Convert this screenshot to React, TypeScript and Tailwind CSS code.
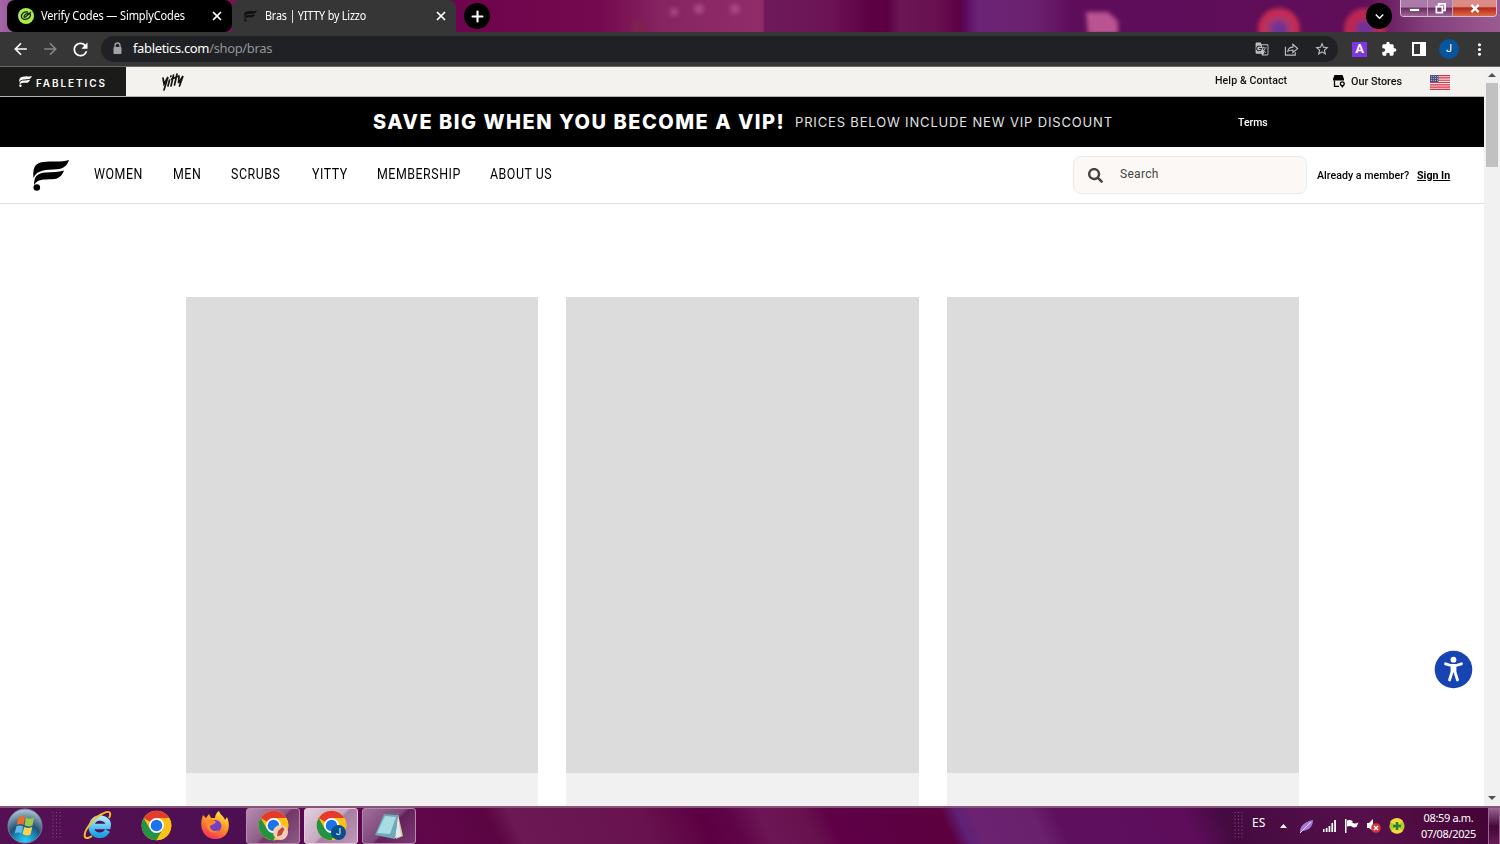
import React from 'react';
import {
  MdArrowBack,
  MdArrowForward,
  MdExtension,
  MdGTranslate,
  MdKeyboardArrowDown,
  MdMoreVert,
  MdRefresh,
  MdStarBorder,
} from 'react-icons/md';
import { FaSearch } from 'react-icons/fa';
import { Plus, X } from 'lucide-react';

const NAV_ITEMS = [
  { label: 'WOMEN', box: 'w-[79px]' },
  { label: 'MEN', box: 'w-[57.500px]' },
  { label: 'SCRUBS', box: 'w-[81px]' },
  { label: 'YITTY', box: 'w-[65px]' },
  { label: 'MEMBERSHIP', box: 'w-[113px]' },
  { label: 'ABOUT US', box: 'w-[80px]' },
];

const FableticsMark: React.FC<{ className?: string }> = ({ className }) => (
  <svg viewBox="0 0 36 31" className={className} fill="currentColor">
    <path d="M.500 18C-.500 8 2 3 10 2C19 1 28 2.500 36 0C34 6 30 9 24 9.300C13 10 4 9.500 .500 18Z" />
    <path d="M1 25C1 17 4 13 13 12.600C20 12.200 25 12 31 10.500C29 16.500 25 19 19 19.300C10 19.600 5 19 1 25Z" />
    <circle cx="3.800" cy="27.500" r="3.300" />
  </svg>
);

const ChromeLogo: React.FC<{ className?: string }> = ({ className }) => (
  <svg viewBox="0 0 48 48" className={className}>
    <circle cx="24" cy="24" r="23" fill="#fbc116" />
    <path d="M24 24L4.100 12.500A23 23 0 0 1 43.900 12.500H24Z" fill="#e33b2e" />
    <path d="M4.100 12.500A23 23 0 0 0 24 47L34 29.500L24 24L14 29.500Z" fill="#229342" />
    <path d="M24 12.500H43.900A23 23 0 0 1 24 47L34 29.500Z" fill="#fbc116" />
    <circle cx="24" cy="24" r="11.500" fill="#fff" />
    <circle cx="24" cy="24" r="9" fill="#1a73e8" />
  </svg>
);

const TopWallpaper = () => (
  <svg className="absolute inset-0" width="1500" height="32" viewBox="0 0 1500 32">
    <defs>
      <linearGradient id="sky" x1="0" x2="1">
        <stop offset="0" stopColor="#a566a7" />
        <stop offset=".006" stopColor="#9b5b9c" />
        <stop offset=".15" stopColor="#7a1258" />
        <stop offset=".31" stopColor="#6e044d" />
        <stop offset=".4" stopColor="#75094f" />
        <stop offset=".44" stopColor="#862461" />
        <stop offset=".508" stopColor="#912c6b" />
        <stop offset=".51" stopColor="#6e1a5b" />
        <stop offset=".555" stopColor="#6c1355" />
        <stop offset=".58" stopColor="#5c0043" />
        <stop offset=".592" stopColor="#5c0043" />
        <stop offset=".6" stopColor="#6c1655" />
        <stop offset=".625" stopColor="#681050" />
        <stop offset=".64" stopColor="#5c0043" />
        <stop offset=".643" stopColor="#5c085b" />
        <stop offset=".652" stopColor="#6b2476" />
        <stop offset=".69" stopColor="#6c216f" />
        <stop offset=".715" stopColor="#5e0d5b" />
        <stop offset=".91" stopColor="#600e58" />
        <stop offset=".95" stopColor="#823e79" />
        <stop offset="1" stopColor="#9b5b91" />
      </linearGradient>
      <filter id="soft">
        <feGaussianBlur stdDeviation="2" />
      </filter>
    </defs>
    <rect width="1500" height="32" fill="url(#sky)" />
    <g filter="url(#soft)">
      <circle cx="674" cy="12" r="4" fill="#aa4685" />
      <circle cx="699" cy="9" r="5" fill="#aa4685" />
      <circle cx="735" cy="9" r="5" fill="#aa4685" />
      <circle cx="639" cy="28" r="8" fill="#7d224d" />
      <path d="M1086 12H1108L1118 21V34H1088Z" fill="#bb5291" />
      <circle cx="1279" cy="29" r="21" fill="#c52a54" />
      <circle cx="1279" cy="30" r="14" fill="#a6386b" />
      <circle cx="1279" cy="29" r="8" fill="#713095" />
      <circle cx="1365" cy="29" r="21" fill="#b92553" />
      <circle cx="1365" cy="29" r="9" fill="#713095" />
    </g>
  </svg>
);

const WindowControls = () => (
  <div className="absolute right-[3px] top-0 flex h-[17px] w-[97px] overflow-hidden rounded-b-[4px] border border-t-0 border-[#d3bed0]">
    <div className="flex w-[27px] items-end justify-center border-r border-[#c3a2bf] bg-[linear-gradient(#ac7aa7_0_45%,#6b285f_50%,#9c6795)] pb-[4px]">
      <i className="h-[4px] w-[11px] border border-[#66556c] bg-white" />
    </div>
    <div className="flex w-[25px] items-center justify-center border-r border-[#c3a2bf] bg-[linear-gradient(#ac7aa7_0_45%,#6b285f_50%,#9c6795)]">
      <svg width="11" height="11" viewBox="0 0 12 12" fill="none" stroke="#fff" strokeWidth="1.900">
        <path d="M4 3V1H11V8H9M1.500 4H8V10.500H1.500Z" />
      </svg>
    </div>
    <div className="flex flex-1 items-center justify-center bg-[linear-gradient(#dc8c86_0_40%,#b7271b_50%,#d96b44)]">
      <svg width="10" height="9" viewBox="0 0 11 10" stroke="#fff" strokeWidth="2.600">
        <path d="M1.500 1L9.500 9M9.500 1L1.500 9" />
      </svg>
    </div>
  </div>
);

const TabStrip = () => (
  <div className="relative flex h-8 text-[12px] text-white">
    <TopWallpaper />
    <div className="relative ml-[7px] flex w-[225px] items-center rounded-lg bg-black pl-[11px]">
      <svg width="16" height="16" viewBox="0 0 16 16">
        <circle cx="8" cy="8" r="8" fill="#a9ed4d" />
        <path
          d="M10 4C6 3 3 6 3.500 9C4 12 9 12 11.500 9.500C14 6 11 4.500 8 6C5 8 6 10 7.500 9L13 4"
          fill="none"
          stroke="#18230c"
          strokeWidth="1.300"
        />
      </svg>
      <span className="ml-[7px] w-[169px]">
        <span className="inline-block origin-left scale-x-[0.92] whitespace-nowrap tracking-[-0.150px]">Verify Codes — SimplyCodes</span>
      </span>
      <X className="h-[14px] w-[14px]" strokeWidth={3} />
    </div>
    <div className="relative flex w-[224px] items-center rounded-t-lg bg-[#363636] pl-[12px]">
      <FableticsMark className="h-[12px] w-[13px] text-[#111]" />
      <span className="ml-[8px] w-[169px]">
        <span className="inline-block origin-left scale-x-[0.9] whitespace-nowrap tracking-[-0.200px]">Bras | YITTY by Lizzo</span>
      </span>
      <X className="h-[14px] w-[14px]" strokeWidth={3} />
    </div>
    <div className="relative ml-2 mt-[3px] flex h-[26px] w-[26px] items-center justify-center rounded-full bg-black">
      <Plus className="h-[17px] w-[17px]" strokeWidth={3} />
    </div>
    <div className="relative ml-auto mr-[108px] mt-[3px] flex h-[26px] w-[26px] items-center justify-center rounded-full bg-black">
      <MdKeyboardArrowDown className="h-[17px] w-[17px]" />
    </div>
    <WindowControls />
  </div>
);

const Toolbar = () => (
  <div className="flex h-[35px] items-center border-b border-[#6b6866] bg-[#363636] text-white">
    <MdArrowBack className="ml-[11px] h-[20px] w-[19px]" />
    <MdArrowForward className="ml-[11px] h-[20px] w-[19px] text-[#858585]" />
    <MdRefresh className="ml-[10px] h-[21px] w-[21px]" />
    <div className="ml-[10px] flex h-[26px] w-[1237px] items-center rounded-full bg-[#202124] pl-[10px]">
      <svg className="mb-[1px]" width="13" height="13" viewBox="0 0 13 13">
        <path d="M4 5.500V3.500A2.500 2.500 0 0 1 9 3.500V5.500" fill="none" stroke="#a2a3a6" strokeWidth="1.300" />
        <rect x="2.500" y="5" width="8" height="7" rx="1" fill="#a2a3a6" />
      </svg>
      <span className="ml-[9px] whitespace-nowrap text-[13px] tracking-[-0.350px]">
        fabletics.com<span className="text-[#929497]">/shop/bras</span>
      </span>
      <div className="ml-auto mr-[8px] flex items-center gap-[15px] text-[#c0c1c3]">
        <MdGTranslate className="h-[14px] w-[14px]" />
        <svg width="15" height="15" viewBox="0 0 16 16" fill="none" stroke="currentColor" strokeWidth="1.200">
          <path d="M1.500 5V14H12V11M4 10C4.500 7 6.500 5.500 9.500 5.500V2.500L14.500 7L9.500 11.200V8.500C7 8.500 5.500 9 4 10Z" />
        </svg>
        <MdStarBorder className="h-[16px] w-[16px]" />
      </div>
    </div>
    <div className="ml-[14px] flex h-[15px] w-[15px] items-center justify-center bg-[#8136e2] font-['Roboto',sans-serif] text-[13px] font-bold">
      A
    </div>
    <MdExtension className="ml-[14px] h-[16px] w-[16px]" />
    <svg className="ml-[15px]" width="14" height="14" viewBox="0 0 14 14">
      <path d="M1 1H13V13H1Z" fill="none" stroke="#fff" strokeWidth="2" />
      <path d="M8 1H13V13H8Z" fill="#fff" />
    </svg>
    <div className="ml-[13px] flex h-[20px] w-[20px] items-center justify-center rounded-full bg-[#07559d] font-['Roboto',sans-serif] text-[11px]">
      J
    </div>
    <MdMoreVert className="ml-[11px] h-[19px] w-[19px]" />
  </div>
);

const UsFlag = () => (
  <svg width="20" height="15" viewBox="0 0 20 15">
    <rect width="20" height="15" fill="#f8dddd" />
    <path d="M0 .6H20M0 2.900H20M0 5.200H20M0 7.500H20M0 9.800H20M0 12.100H20M0 14.400H20" stroke="#cc3850" strokeWidth="1.150" />
    <rect width="8.500" height="7" fill="#505184" />
    <path d="M1 1.500H8M1 3.500H8M1 5.500H8" stroke="#bfc0d8" strokeWidth=".8" strokeDasharray="1 1" />
  </svg>
);

const StoreIcon = () => (
  <svg width="13" height="13" viewBox="0 0 13 13" fill="none">
    <path d="M1.500 0H9.500L11 4V5.500H0V4Z" fill="#000" />
    <path d="M1.500 5.500V11.300H6" stroke="#000" strokeWidth="1.300" />
    <circle cx="9.300" cy="8.800" r="1.900" fill="#f3f2ee" stroke="#000" strokeWidth="1.300" />
    <path d="M7.800 10.500L9.300 13L10.800 10.500Z" fill="#000" />
  </svg>
);

const BrandBar = () => (
  <div className="flex h-[30px] border-b border-[#b5b5b0] bg-[#f3f2ee] font-['Roboto',sans-serif] text-[11px] font-medium text-[#111]">
    <div className="flex w-[126px] items-center bg-[#1b1b19] pl-[19px] text-white">
      <FableticsMark className="mb-[1px] h-[11px] w-[13px]" />
      <span className="ml-[4px] mt-[3px] font-['Inter',sans-serif] text-[10px] font-semibold tracking-[1.900px]">FABLETICS</span>
    </div>
    <svg className="ml-[35px] mt-[5px]" width="25" height="20" viewBox="0 0 25 20" fill="none" stroke="#151515" strokeWidth="1.700" strokeLinecap="round">
      <path d="M2 6L3 12L7 5L3 18M8.500 8L7 14M10 4L9.800 4.500M12.500 3L10 14M16 2L13.500 13M10.500 7L18 4M18 5L17.500 11L22 4L18.500 14" />
    </svg>
    <div className="ml-[1029px] mt-[6px] w-[118px]">
      <span className="inline-block origin-left scale-x-[0.96] whitespace-nowrap tracking-[0.100px]">Help &amp; Contact</span>
    </div>
    <div className="mt-[8px] w-[18px]">
      <StoreIcon />
    </div>
    <div className="mt-[7px] w-[79px] whitespace-nowrap">
      <span className="inline-block origin-left scale-x-[0.98]">Our Stores</span>
    </div>
    <div className="mt-[8px] w-[20px]">
      <UsFlag />
    </div>
  </div>
);

const PromoBanner = () => (
  <div className="flex h-[50px] items-center bg-black text-white">
    <span className="ml-[373px] w-[422px] whitespace-nowrap font-['Inter',sans-serif] text-[20px] font-extrabold tracking-[1.500px]">
      SAVE BIG WHEN YOU BECOME A VIP!
    </span>
    <span className="mt-[1px] w-[443px] whitespace-nowrap font-['Inter',sans-serif] text-[13px] tracking-[0.840px] text-[#e2e2e2]">
      PRICES BELOW INCLUDE NEW VIP DISCOUNT
    </span>
    <span className="mt-[2px] origin-left scale-x-[0.95] font-['Roboto',sans-serif] text-[11px] font-medium">Terms</span>
  </div>
);

const SiteHeader = () => (
  <header className="flex h-[57px] items-center border-b border-[#dedede] bg-white font-['Roboto',sans-serif] text-black">
    <FableticsMark className="ml-[33px] h-[31px] w-[36px]" />
    <nav className="-mt-[2px] ml-[25px] flex w-[979px] text-[14px] tracking-[0.600px]">
      {NAV_ITEMS.map((item) => (
        <div key={item.label} className={item.box}>
          <span className="inline-block origin-left scale-x-[0.885] whitespace-nowrap">{item.label}</span>
        </div>
      ))}
    </nav>
    <div className="flex h-[38px] w-[234px] items-center rounded-lg border border-[#eeeae6] bg-[#fbf8f5] pl-[14px] text-[#444]">
      <FaSearch className="mt-[1px] h-[15px] w-[15px]" />
      <span className="-mt-[2px] ml-[17px] text-[12px] tracking-[0.300px]">Search</span>
    </div>
    <span className="ml-[10px] mt-[2px] w-[100px] text-[11px] font-medium">
      <span className="inline-block origin-left scale-x-[0.97] whitespace-nowrap">Already a member?</span>
    </span>
    <span className="mt-[2px] origin-left scale-x-[0.97] whitespace-nowrap text-[11px] font-bold underline">Sign In</span>
  </header>
);

const ProductSkeleton = () => (
  <div className="flex flex-col bg-[#f1f1f1]">
    <div className="h-[476px] bg-[#dcdcdc]" />
  </div>
);

const Scrollbar = () => (
  <div className="flex w-[16px] flex-col items-center bg-[#f1f1f1]">
    <svg className="mt-[6px]" width="8" height="4" viewBox="0 0 8 4">
      <path d="M0 4L4 0L8 4Z" fill="#505050" />
    </svg>
    <div className="mt-[6px] h-[84px] w-[12px] bg-[#c1c1c1]" />
    <svg className="mb-[6px] mt-auto" width="8" height="4" viewBox="0 0 8 4">
      <path d="M0 0L4 4L8 0Z" fill="#505050" />
    </svg>
  </div>
);

const Page = () => (
  <div className="relative flex h-[739px] bg-white">
    <main className="flex w-[1484px] flex-col">
      <BrandBar />
      <PromoBanner />
      <SiteHeader />
      <div className="grid flex-1 grid-cols-[352px_353px_352px] gap-x-7 pl-[186px] pt-[93px]">
        <ProductSkeleton />
        <ProductSkeleton />
        <ProductSkeleton />
      </div>
    </main>
    <Scrollbar />
    {/* Accessibility widget */}
    <svg className="absolute left-[1434px] top-[582.500px]" width="39" height="39" viewBox="0 0 39 39">
      <circle cx="19.500" cy="19.500" r="18.800" fill="#1743b3" />
      <circle cx="19.500" cy="9.700" r="2.900" fill="#fff" />
      <path
        d="M11.500 13.800L17 15.500H22L27.500 13.800M19.500 16V21M18 16L18 22L15.500 30M21 16V22L23.500 30"
        fill="none"
        stroke="#fff"
        strokeWidth="2.800"
        strokeLinecap="round"
        strokeLinejoin="round"
      />
    </svg>
  </div>
);

const Grip = () => (
  <svg width="9" height="28" viewBox="0 0 9 28">
    <path d="M1 0V28M4.500 0V28M8 0V28" stroke="#865083" strokeWidth="1" strokeDasharray="1 2.500" />
  </svg>
);

const StartOrb = () => (
  <svg width="36" height="36" viewBox="0 0 36 36">
    <defs>
      <radialGradient id="orb" cx=".5" cy=".95" r=".9">
        <stop offset="0" stopColor="#2cd1fb" />
        <stop offset=".42" stopColor="#1679ac" />
        <stop offset=".55" stopColor="#235173" />
        <stop offset="1" stopColor="#a8becb" />
      </radialGradient>
    </defs>
    <circle cx="18" cy="18" r="17" fill="url(#orb)" stroke="#6c86a0" strokeWidth="1" />
    <path d="M11.500 9.500Q14 7.500 18 9L16.500 17Q12.500 15 9.500 17Z" fill="#ee6b32" />
    <path d="M19 9.500Q23 12 27 9.500L25.500 17.500Q22 19.500 17.500 17.300Z" fill="#9ccc45" />
    <path d="M9.300 18.500Q12.500 16.500 16.200 18.500L14.500 25.500Q11 23.500 7.800 25.500Z" fill="#62b9ed" />
    <path d="M17.300 19Q21 21 25.300 19L23.500 26.500Q20 28.500 15.500 26Z" fill="#ffd34f" />
  </svg>
);

const ExplorerLogo = () => (
  <svg width="30" height="30" viewBox="0 0 30 30" fill="none">
    <defs>
      <linearGradient id="ie" x1="0" x2="0" y1="0" y2="1">
        <stop offset="0" stopColor="#a6eaff" />
        <stop offset="1" stopColor="#1ba1e5" />
      </linearGradient>
    </defs>
    <path d="M24.500 20.500C22.500 24.500 19 25.500 15.500 25.200C10 24.500 7.500 20 8.500 15C10 9.500 14 7.500 18 8C23.500 9 26 12 25 16.500H10" stroke="url(#ie)" strokeWidth="5.500" />
    <path d="M26 8C29 2 26 0 19 4C9 9 0 22 2 27C3 29 6 28 9 26" stroke="#f4bb2f" strokeWidth="2" />
  </svg>
);

const FirefoxLogo = () => (
  <svg width="30" height="30" viewBox="0 0 30 30">
    <defs>
      <linearGradient id="fox" x1=".8" x2=".3" y1="0" y2="1">
        <stop offset="0" stopColor="#fff14d" />
        <stop offset=".45" stopColor="#ff9a25" />
        <stop offset="1" stopColor="#f22e5c" />
      </linearGradient>
    </defs>
    <path
      d="M3 5L6 8L9 4L11 8L15 8C15 5 17 2 19 1C20 5 24 6 25 10L27 7C31 16 29 29 15 29C4 29-2 18 3 5Z"
      fill="url(#fox)"
    />
    <circle cx="15.500" cy="16" r="6" fill="#7540c6" />
    <path d="M6 10C10 10 12 9 16 12C14 15 12 14 10 16C10 21 15 22 19 20C14 26 5 21 6 10Z" fill="#ff8b28" />
  </svg>
);

const NotepadIcon = () => (
  <svg width="30" height="28" viewBox="0 0 30 28">
    <path d="M24 2L29 24L22 27Z" fill="#d8c89a" />
    <path d="M10 2L24 3L21 27L1 23Z" fill="#6fa9b8" />
    <path d="M11 4L22 5L16 22L3 21Z" fill="#a7dce2" />
    <path d="M24 4L27 24L21 26Z" fill="#dcecec" />
    <path d="M11 1.500H25" stroke="#666e70" strokeWidth="2" strokeDasharray="1.500 1" />
  </svg>
);

const Tray = () => (
  <div className="flex h-full items-center text-white">
    <Grip />
    <span className="ml-[9px] w-[28px] pb-[6px] text-[12px]">ES</span>
    <svg width="7" height="4" viewBox="0 0 7 4">
      <path d="M0 4L3.500 0L7 4Z" fill="#fff" />
    </svg>
    <svg className="ml-[12px]" width="15" height="15" viewBox="0 0 15 15">
      <path d="M1 14C0 7 7 2 14 1C14 8 9 12 3 12Z" fill="#a37bd7" />
      <path d="M1 14L12 3" stroke="#e4d5fa" strokeWidth="1" />
    </svg>
    <svg className="ml-[9px]" width="13" height="12" viewBox="0 0 13 12" fill="#fff">
      <path d="M0 9H1.500V12H0ZM2.800 8H4.500V12H2.800ZM5.600 6H7.300V12H5.600ZM8.400 3H10.100V12H8.400ZM11.200 0H13V12H11.200Z" />
    </svg>
    <svg className="ml-[9px]" width="14" height="14" viewBox="0 0 14 14" fill="#fff">
      <path d="M0 0H1.500V14H0ZM2 1.500Q5 .5 7.500 2V4Q10 5 13.500 3.500L11.500 8Q8 9 7 7.500Q5 6.500 2 7.500Z" />
    </svg>
    <svg className="ml-[8px]" width="14" height="14" viewBox="0 0 14 14">
      <path d="M0 4H2L6 0V12L2 9H0Z" fill="#fff" />
      <circle cx="9" cy="9" r="4.800" fill="#dc3038" />
      <path d="M7 7L11 11M11 7L7 11" stroke="#fff" strokeWidth="1.500" />
    </svg>
    <svg className="ml-[8px]" width="16" height="16" viewBox="0 0 16 16">
      <circle cx="8" cy="8" r="7.600" fill="#b6ca2c" />
      <path d="M1 4A8 8 0 0 1 14 3L8 8Z" fill="#f5d83c" />
      <path d="M2 13L8 8L14 13A8 8 0 0 1 2 13Z" fill="#f5d83c" />
      <path d="M8 4V12M4 8H12" stroke="#208436" strokeWidth="2.600" />
    </svg>
    <div className="ml-[10px] w-[67px] text-center text-[11px] leading-[16px] tracking-[-0.350px]">
      <div>08:59 a.m.</div>
      <div>07/08/2025</div>
    </div>
    <div className="ml-[6px] h-[37px] w-[12px] border border-[#9b6692] bg-[linear-gradient(#92618a,#47053a_50%,#651c54)]" />
  </div>
);

const Taskbar = () => (
  <div className="flex h-[38px] items-center border-t-2 border-[#855375] bg-[linear-gradient(65deg,#551052,#4c1052_16%,#5d0750_23%,#600649_29%,#5b0543_33%,#6b1855_34.5%,#68134f_43%,#5d0043_47%,#5f0447_49%,#6c1655_51%,#68114f_54%,#5f0047_55.5%,#5c003f_63%,#5f2075_64%,#6b2371_65%,#69206d_69%,#5e105f_70.500%,#5d0d5a_79%,#440b40_81.500%,#561049_91%,#410235)]">
    <div className="-mt-[1px] ml-[7px] w-[45px]">
      <StartOrb />
    </div>
    <Grip />
    <div className="-mt-[2px] ml-[22px] w-[58px]">
      <ExplorerLogo />
    </div>
    <ChromeLogo className="-mt-[1px] h-[31px] w-[31px]" />
    <div className="-mt-[2px] ml-[28px]">
      <FirefoxLogo />
    </div>
    <div className="ml-[16px] flex gap-[4px]">
      <div className="relative flex h-[36px] w-[54px] items-center justify-center rounded-[3px] border border-[#b98caf] bg-[linear-gradient(135deg,#b48daf,#8e5c86_49%,#76356a_54%,#8c5a83)]">
        <ChromeLogo className="-mt-[1px] h-[31px] w-[31px]" />
        <svg className="absolute bottom-[3px] right-[11px]" width="15" height="15" viewBox="0 0 15 15">
          <circle cx="7.500" cy="7.500" r="7.500" fill="#f9cbbb" />
          <path d="M4 11.500L5 6L9.500 2L11.500 4L8.500 10Z" fill="#bd4b2c" />
        </svg>
      </div>
      <div className="relative flex h-[36px] w-[54px] items-center justify-center rounded-[3px] border border-[#e6cae0] bg-[linear-gradient(135deg,#e3d0df,#c6a8c1_49%,#a77ca1_54%,#be9ab8)]">
        <ChromeLogo className="-mt-[1px] h-[31px] w-[31px]" />
        <div className="absolute bottom-[3px] right-[11px] flex h-[15px] w-[15px] items-center justify-center rounded-full bg-[#07508c] font-['Roboto',sans-serif] text-[9px] text-white">
          J
        </div>
      </div>
      <div className="flex h-[36px] w-[54px] items-center justify-center rounded-[3px] border border-[#b18aab] bg-[linear-gradient(135deg,#9e709b,#7f4679_49%,#64205b_54%,#7a3872)]">
        <NotepadIcon />
      </div>
    </div>
    <div className="ml-auto h-full">
      <Tray />
    </div>
  </div>
);

export default function App() {
  return (
    <div className="h-[844px] w-[1500px] overflow-hidden font-['Noto_Sans',sans-serif]">
      <TabStrip />
      <Toolbar />
      <Page />
      <Taskbar />
    </div>
  );
}
